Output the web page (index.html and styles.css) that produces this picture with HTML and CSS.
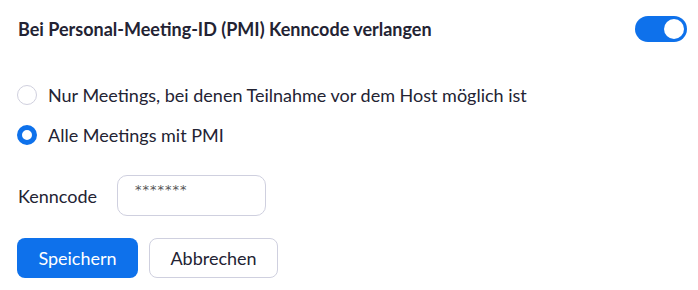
FILE: index.html
```html
<!DOCTYPE html>
<html lang="de">
<head>
<meta charset="utf-8">
<link rel="stylesheet" href="styles.css">
</head>
<body>
<div class="page">
  <div class="header">
    <div class="title">Bei Personal-Meeting-ID (PMI) Kenncode verlangen</div>
    <div class="toggle"><span class="knob"></span></div>
  </div>
  <div class="options">
    <label class="option"><span class="radio"></span><span>Nur Meetings, bei denen Teilnahme vor dem Host möglich ist</span></label>
    <label class="option"><span class="radio checked"></span><span>Alle Meetings mit PMI</span></label>
  </div>
  <div class="field">
    <span class="label">Kenncode</span>
    <div class="input">*******</div>
  </div>
  <div class="actions">
    <button class="btn primary">Speichern</button>
    <button class="btn secondary">Abbrechen</button>
  </div>
</div>
</body>
</html>
```
FILE: styles.css
```css
* { box-sizing: border-box; }
html, body { margin: 0; padding: 0; background: #fff; }
body { font-family: Lato, "Open Sans", sans-serif; color: #232333; }
.page { padding: 16px 11px 0 18px; }
.header { display: flex; justify-content: space-between; align-items: center; height: 26px; }
.title { font-weight: 700; font-size: 18px; line-height: 22px; }
.toggle { width: 52px; height: 26px; border-radius: 13px; background: #0e71eb; position: relative; }
.knob { position: absolute; right: 3px; top: 3px; width: 20px; height: 20px; border-radius: 50%; background: #fff; }
.options { display: flex; flex-direction: column; gap: 20px; margin-top: 43px; }
.option { display: flex; align-items: center; gap: 11px; font-size: 18px; height: 20px; line-height: 20px; }
.radio { width: 20px; height: 20px; border-radius: 50%; border: 1px solid #d0d0de; display: inline-block; flex: none; margin-left: -1px; }
.radio.checked { border: 5px solid #0e71eb; }
.field { display: flex; align-items: center; margin-top: 30px; }
.label { font-size: 18px; width: 99px; }
.input { width: 149px; height: 41px; border: 1px solid #cfd0df; border-radius: 10px; padding: 6px 17px; font-size: 13px; color: #555; letter-spacing: 1px; font-family: "DejaVu Sans", sans-serif; }
.actions { display: flex; gap: 11px; margin-top: 22px; margin-left: -1px; }
.btn { height: 40px; border-radius: 8px; font-family: Lato, sans-serif; font-size: 18px; padding: 0; cursor: pointer; }
.primary { width: 121px; background: #0e71eb; color: #fff; border: none; }
.secondary { width: 129px; background: #fff; color: #232333; border: 1px solid #cfd0df; }
```
